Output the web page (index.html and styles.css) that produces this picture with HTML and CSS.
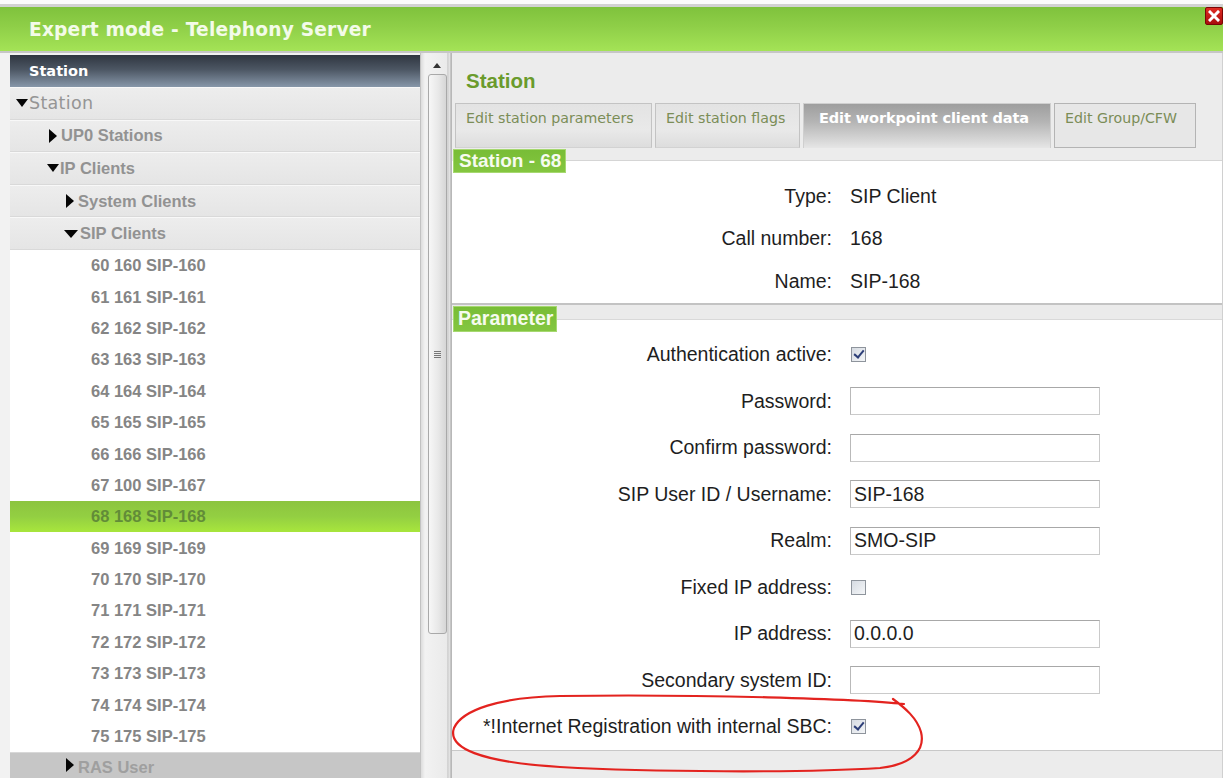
FILE: index.html
```html
<!DOCTYPE html>
<html lang="en">
<head>
<meta charset="utf-8">
<title>Expert mode - Telephony Server</title>
<link rel="stylesheet" href="styles.css">
</head>
<body>
<div class="app">
  <div class="topline"></div>
  <header class="titlebar">
    <span class="title">Expert mode - Telephony Server</span>
    <span class="close" title="Close">
      <svg width="12" height="12" viewBox="0 0 12 12"><path d="M2 2 L10 10 M10 2 L2 10" stroke="#fff" stroke-width="3" stroke-linecap="square"/></svg>
    </span>
  </header>

  <div class="main">
    <aside class="nav">
      <div class="nav-tree">
        <div class="nav-head">Station</div>
        <div class="node open root">Station</div>
        <div class="node closed l1">UP0 Stations</div>
        <div class="node open l1o">IP Clients</div>
        <div class="node closed l2">System Clients</div>
        <div class="node open l2o">SIP Clients</div>
        <ul class="items">
          <li>60 160 SIP-160</li>
          <li>61 161 SIP-161</li>
          <li>62 162 SIP-162</li>
          <li>63 163 SIP-163</li>
          <li>64 164 SIP-164</li>
          <li>65 165 SIP-165</li>
          <li>66 166 SIP-166</li>
          <li>67 100 SIP-167</li>
          <li class="selected">68 168 SIP-168</li>
          <li>69 169 SIP-169</li>
          <li>70 170 SIP-170</li>
          <li>71 171 SIP-171</li>
          <li>72 172 SIP-172</li>
          <li>73 173 SIP-173</li>
          <li>74 174 SIP-174</li>
          <li>75 175 SIP-175</li>
        </ul>
        <div class="node closed l2 dim">RAS User</div>
      </div>
      <div class="scrollbar">
        <div class="sb-up"></div>
        <div class="sb-thumb"><span class="grip"></span></div>
      </div>
    </aside>

    <section class="pane">
      <h1 class="pane-title">Station</h1>
      <nav class="tabs">
        <span class="tab t1">Edit station parameters</span>
        <span class="tab t2">Edit station flags</span>
        <span class="tab t3 active">Edit workpoint client data</span>
        <span class="tab t4">Edit Group/CFW</span>
      </nav>

      <div class="legend-row">
        <span class="legend">Station - 68</span>
        <span class="legend-line"></span>
      </div>
      <div class="info">
        <div class="row info-row"><span class="lbl">Type:</span><span class="val">SIP Client</span></div>
        <div class="row info-row"><span class="lbl">Call number:</span><span class="val">168</span></div>
        <div class="row info-row"><span class="lbl">Name:</span><span class="val">SIP-168</span></div>
      </div>

      <div class="band"><span class="legend">Parameter</span></div>
      <div class="form">
        <div class="row"><span class="lbl">Authentication active:</span><span class="check on"></span></div>
        <div class="row"><span class="lbl">Password:</span><span class="field"></span></div>
        <div class="row"><span class="lbl">Confirm password:</span><span class="field"></span></div>
        <div class="row"><span class="lbl">SIP User ID / Username:</span><span class="field">SIP-168</span></div>
        <div class="row"><span class="lbl">Realm:</span><span class="field">SMO-SIP</span></div>
        <div class="row"><span class="lbl">Fixed IP address:</span><span class="check"></span></div>
        <div class="row"><span class="lbl">IP address:</span><span class="field">0.0.0.0</span></div>
        <div class="row"><span class="lbl">Secondary system ID:</span><span class="field"></span></div>
        <div class="row"><span class="lbl">*!Internet Registration with internal SBC:</span><span class="check on"></span></div>
      </div>
      <div class="foot"></div>
    </section>
  </div>

  <svg class="markup" width="1223" height="778" viewBox="0 0 1223 778">
    <path d="M 904 704 C 860 699, 700 694, 560 696 C 500 697, 462 710, 454 728 C 447 748, 480 762, 560 767 C 650 772, 800 773, 880 768 C 915 764, 925 748, 921 732 C 917 718, 905 708, 893 699"
          fill="none" stroke="#e3231f" stroke-width="2.2" stroke-linecap="round"/>
  </svg>
</div>
</body>
</html>
```

FILE: styles.css
```css
* { box-sizing: border-box; }

html, body {
  margin: 0;
  padding: 0;
}

body {
  background: #f4f4f4;
  font-family: "Liberation Sans", Arial, sans-serif;
  color: #222;
}

.app {
  position: relative;
  width: 1223px;
  height: 778px;
  overflow: hidden;
  background: #f2f2f2;
  display: flex;
  flex-direction: column;
}

/* ---------- window title ---------- */
.topline {
  height: 7px;
  background: #fbfbfb;
  border-bottom: 3px solid #d2d2d2;
  flex: none;
}

.titlebar {
  flex: none;
  height: 46px;
  display: flex;
  justify-content: space-between;
  align-items: flex-start;
  background: linear-gradient(to bottom, #7fc23c 0%, #8fcf48 45%, #a4e356 100%);
  border-bottom: 2px solid #c6c6c6;
}

.title {
  padding: 12px 0 0 29px;
  font-family: "DejaVu Sans", Verdana, sans-serif;
  font-weight: bold;
  font-size: 18.6px;
  line-height: 22px;
  letter-spacing: 0.2px;
  color: #f3fbe9;
}

.close {
  width: 18px;
  height: 18px;
  display: flex;
  align-items: center;
  justify-content: center;
  background: linear-gradient(to bottom, #e02a22, #a80d0d);
  border: 1px solid #7a0505;
  border-radius: 2px;
}

/* ---------- main area ---------- */
.main {
  flex: 1;
  display: flex;
  padding-left: 10px;
  min-height: 0;
}

.nav {
  display: flex;
  flex: none;
  width: 442px;
}

.nav-tree {
  width: 411px;
  display: flex;
  flex-direction: column;
  background: #fff;
  border-right: 1px solid #c2c2c2;
  padding-top: 2px;
  background-clip: content-box;
}

.nav-head {
  flex: none;
  height: 32px;
  display: flex;
  align-items: center;
  padding-left: 19px;
  background: linear-gradient(to bottom, #2f3640 0%, #4c5663 45%, #8797a9 100%);
  color: #fff;
  font-family: "DejaVu Sans", Verdana, sans-serif;
  font-weight: bold;
  font-size: 14.5px;
}

.node {
  flex: none;
  height: 32.6px;
  display: flex;
  align-items: center;
  background: linear-gradient(to bottom, #ededed, #e5e5e5);
  border-top: 1px solid #f8f8f8;
  border-bottom: 1px solid #d9d9d9;
  font-weight: bold;
  font-size: 16.5px;
  color: #929292;
}

.node.root {
  font-family: "DejaVu Sans", Verdana, sans-serif;
  font-weight: normal;
  font-size: 17.5px;
  letter-spacing: 0.3px;
  padding-left: 6px;
  color: #959595;
}

.node::before {
  content: "";
  width: 0;
  height: 0;
  display: inline-block;
  flex: none;
}

.node.open::before {
  border-left: 6px solid transparent;
  border-right: 6px solid transparent;
  border-top: 8px solid #050505;
  margin-right: 1px;
}

.node.closed::before {
  border-top: 7px solid transparent;
  border-bottom: 7px solid transparent;
  border-left: 8px solid #050505;
  margin-right: 4px;
}

.node.l1 { padding-left: 39px; }
.node.l1o { padding-left: 37px; }
.node.l1o::before { border-left-width: 6.5px; border-right-width: 6.5px; }
.node.l2 { padding-left: 56px; }
.node.l2o { padding-left: 54px; }
.node.l2o::before { border-left-width: 7px; border-right-width: 7px; margin-right: 2px; }

.node.dim {
  flex: 1;
  background: #c6c6c6;
  border-top: 1px solid #d8d8d8;
  border-bottom: none;
  color: #9f9f9f;
  align-items: flex-start;
  padding-top: 5px;
}

.items {
  list-style: none;
  margin: 0;
  padding: 0;
  background: #fff;
  flex: none;
}

.items li {
  height: 31.4px;
  display: flex;
  align-items: center;
  padding-left: 81px;
  font-weight: bold;
  font-size: 16.5px;
  color: #858585;
}

.items li.selected {
  background: linear-gradient(to bottom, #8cc43f 0%, #93cf42 50%, #a8e63c 100%);
  color: #628c38;
}

/* ---------- tree scrollbar ---------- */
.scrollbar {
  width: 31px;
  padding: 3px 4px 0 5px;
  background: linear-gradient(to right, #dcdcdc 0, #f2f2f2 4px, #eaeaea 26px, #bdbdbd 27px, #f0f0f0 28px, #b8b8b8 30px);
  display: flex;
  flex-direction: column;
  align-items: center;
}

.sb-up {
  width: 0;
  height: 0;
  margin-top: 7px;
  border-left: 4px solid transparent;
  border-right: 4px solid transparent;
  border-bottom: 5px solid #333;
}

.sb-thumb {
  margin-top: 6px;
  width: 19px;
  height: 560px;
  border: 1px solid #a9a9a9;
  border-radius: 3px;
  background: linear-gradient(to right, #f7f7f7, #e8e8e8 55%, #d6d6d6);
  display: flex;
  align-items: center;
  justify-content: center;
}

.grip {
  width: 7px;
  height: 7px;
  background: repeating-linear-gradient(to bottom, #777 0, #777 1px, transparent 1px, transparent 2px);
}

/* ---------- content pane ---------- */
.pane {
  flex: 1;
  display: flex;
  flex-direction: column;
  background: #ececec;
  min-width: 0;
  border-right: 1px solid #d0d0d0;
}

.pane-title {
  margin: 0;
  height: 50px;
  flex: none;
  display: flex;
  align-items: center;
  padding: 6px 0 0 14px;
  font-family: "Liberation Sans", Arial, sans-serif;
  font-weight: bold;
  font-size: 20.5px;
  color: #6a9b2c;
}

.tabs {
  flex: none;
  height: 45px;
  display: flex;
  gap: 3px;
  padding-left: 3px;
}

.tab {
  height: 45px;
  padding: 5px 0 0 10px;
  border: 1px solid #c3c3c3;
  border-bottom: 1px solid #d2d2d2;
  background: linear-gradient(to bottom, #e3e3e3, #e9e9e9 60%, #dddddd);
  font-family: "DejaVu Sans", Verdana, sans-serif;
  font-size: 14.2px;
  line-height: 18px;
  color: #7b8d57;
  white-space: nowrap;
}

.tab.t1 { width: 197px; }
.tab.t2 { width: 145px; }
.tab.t3 { width: 248px; }
.tab.t4 { width: 142px; border-color: #b4b4b4; background: #e7e7e7; }

.tab.active {
  padding-left: 15px;
  border-color: #cfcfcf;
  border-bottom: none;
  background: linear-gradient(to bottom, #9e9e9e 0%, #b4b4b4 40%, #d9d9d9 85%, #e6e6e6 100%);
  color: #fff;
  font-weight: bold;
  font-size: 14.5px;
  letter-spacing: -0.1px;
}

.legend-row {
  flex: none;
  height: 25px;
  display: flex;
  align-items: flex-start;
  padding-top: 1px;
  background: linear-gradient(to bottom, #ececec 0, #ececec 13px, #fff 13px);
}

.legend {
  display: inline-flex;
  align-items: center;
  height: 24px;
  margin-left: 1px;
  padding: 0 4px 0 5px;
  background: linear-gradient(to bottom, #78bd36, #84c640);
  border: 1px solid #a6d870;
  color: #f6fbef;
  font-family: "Liberation Sans", Arial, sans-serif;
  font-weight: bold;
  font-size: 19px;
  white-space: nowrap;
}

.legend-line {
  flex: 1;
  margin-top: 11px;
  border-top: 1px solid #d5d5d5;
}

.info {
  background: #fff;
  padding-top: 2px;
  flex: none;
}

.row {
  display: grid;
  grid-template-columns: 368px 1fr;
  column-gap: 18px;
  align-items: center;
  padding-left: 12px;
  height: 46.5px;
  font-size: 19.5px;
}

.info-row { height: 42.5px; }

.lbl {
  text-align: right;
  white-space: nowrap;
  color: #1e1e1e;
}

.val {
  color: #1e1e1e;
}

.band {
  flex: none;
  height: 17px;
  background: #ebebeb;
  border-top: 2px solid #c3c3c3;
  border-bottom: 1px solid #d9d9d9;
  overflow: visible;
  position: relative;
  z-index: 1;
}

.band .legend {
  height: 26px;
  margin-top: 1px;
  font-size: 19.5px;
  padding: 0 3px 0 4px;
}

.form {
  flex: none;
  background: #fff;
  padding-top: 12px;
}

.field {
  width: 250px;
  height: 28px;
  border: 1px solid #cacaca;
  border-top-color: #a8a8a8;
  border-left-color: #b9b9b9;
  padding: 0 3px;
  display: flex;
  align-items: center;
  font-size: 19.5px;
  color: #1e1e1e;
  background: #fff;
}

.check {
  width: 15px;
  height: 15px;
  margin-left: 1px;
  border: 1px solid #8e949c;
  background: linear-gradient(135deg, #d6dbe2, #f4f6f8);
  position: relative;
}

.check.on::after {
  content: "";
  position: absolute;
  left: 4px;
  top: 0px;
  width: 4px;
  height: 8px;
  border-right: 2px solid #2d3f78;
  border-bottom: 2px solid #2d3f78;
  transform: rotate(40deg);
}

.foot {
  flex: 1;
  background: #ececec;
  border-top: 1px solid #c8c8c8;
}

/* hand-drawn highlight on top of the form */
.markup {
  position: absolute;
  left: 0;
  top: 0;
  pointer-events: none;
}
```
